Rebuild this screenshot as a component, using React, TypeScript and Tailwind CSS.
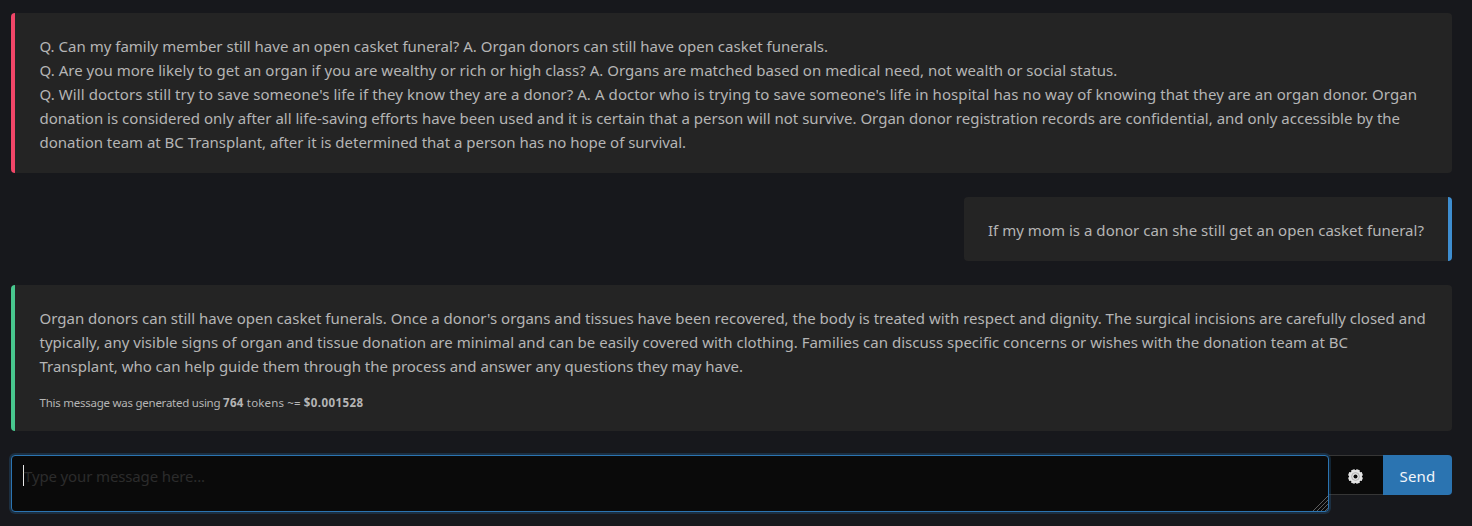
import { useId } from "react";

type Line = { text: string; tracking: string };

const context: Line[] = [
  { text: "Q. Can my family member still have an open casket funeral? A. Organ donors can still have open casket funerals.", tracking: "tracking-[0.004px]" },
  { text: "Q. Are you more likely to get an organ if you are wealthy or rich or high class? A. Organs are matched based on medical need, not wealth or social status.", tracking: "tracking-[0.033px]" },
  { text: "Q. Will doctors still try to save someone's life if they know they are a donor? A. A doctor who is trying to save someone's life in hospital has no way of knowing that they are an organ donor. Organ", tracking: "tracking-[0.079px]" },
  { text: "donation is considered only after all life-saving efforts have been used and it is certain that a person will not survive. Organ donor registration records are confidential, and only accessible by the", tracking: "tracking-[0.01px]" },
  { text: "donation team at BC Transplant, after it is determined that a person has no hope of survival.", tracking: "tracking-[-0.02px]" },
];

const question: Line[] = [
  { text: "If my mom is a donor can she still get an open casket funeral?", tracking: "tracking-[0.026px]" },
];

const answer: Line[] = [
  { text: "Organ donors can still have open casket funerals. Once a donor's organs and tissues have been recovered, the body is treated with respect and dignity. The surgical incisions are carefully closed and", tracking: "tracking-[0.004px]" },
  { text: "typically, any visible signs of organ and tissue donation are minimal and can be easily covered with clothing. Families can discuss specific concerns or wishes with the donation team at BC", tracking: "tracking-[0.007px]" },
  { text: "Transplant, who can help guide them through the process and answer any questions they may have.", tracking: "tracking-[-0.024px]" },
];

function Lines({ lines }: { lines: Line[] }) {
  return (
    <p className="whitespace-nowrap text-[15px] leading-6">
      {lines.map((line) => (
        <span key={line.text} className={`block ${line.tracking}`}>
          {line.text}
        </span>
      ))}
    </p>
  );
}

function Gear() {
  const mask = useId();
  const teeth = [0, 45, 90, 135, 180, 225, 270, 315];
  return (
    <svg viewBox="0 0 15 15" className="size-[15px]" aria-hidden="true">
      <mask id={mask}>
        <rect width="15" height="15" fill="white" />
        <circle cx="7.5" cy="7.5" r="2" fill="black" />
      </mask>
      <g mask={`url(#${mask})`} fill="#e4e4e4">
        <circle cx="7.5" cy="7.5" r="6.5" />
        {teeth.map((a) => (
          <rect key={a} x="5.6" y="0.1" width="3.8" height="4" rx="0.5" transform={`rotate(${a + 22.5} 7.5 7.5)`} />
        ))}
        <circle cx="7.5" cy="7.5" r="3.9" fill="none" stroke="#a6a6a6" strokeWidth="0.8" />
      </g>
    </svg>
  );
}

export default function App() {
  return (
    <main className="flex h-[526px] flex-col gap-6 overflow-hidden bg-[#17181c] pt-[13px] pr-5 pl-[11px] font-['Noto_Sans','Open_Sans',sans-serif] text-[#b5b5b5]">
      <article className="rounded border-l-4 border-[#f14668] bg-[#242424] pt-[21px] pr-6 pb-[19px] pl-[24.5px]">
        <Lines lines={context} />
      </article>

      <article className="self-end rounded border-r-4 border-[#3e8ed0] bg-[#242424] px-6 pt-[21px] pb-[19px]">
        <Lines lines={question} />
      </article>

      <article className="rounded border-l-4 border-[#48c78e] bg-[#242424] pt-[21px] pr-6 pb-[19px] pl-[24.5px]">
        <Lines lines={answer} />
        <p className="mt-4 whitespace-nowrap text-[11.5px] leading-[18px]">
          <span className="tracking-[-0.25px]">This message was generated using </span>
          <strong className="tracking-[0.3px]">764</strong>
          <span className="tracking-[0.15px]"> tokens ~= </span>
          <strong className="tracking-[0.42px]">$0.001528</strong>
        </p>
      </article>

      <form className="flex items-start">
        <div className="relative z-10 flex h-[57px] w-[1318px] rounded border border-[#2b74b1] bg-[#0a0a0a] px-[11px] pt-2 shadow-[0_0_0_2px_rgba(43,116,177,0.25)]">
          <span className="mt-px h-[21px] w-px bg-[#e8e8e8]" />
          <span className="whitespace-nowrap text-[15px] leading-6 tracking-[-0.135px] text-[#2c2c2c]">Type your message here...</span>
          <svg viewBox="0 0 16 16" className="absolute right-0 bottom-0 size-4" stroke="#686868" strokeWidth="0.9" aria-hidden="true">
            <path d="M1 16 16 1M5 16 16 5M9 16l7-7M13 16l3-3" />
          </svg>
        </div>
        <button type="button" aria-label="Settings" className="flex h-10 w-[54px] items-center justify-center border-y border-[#363636] bg-[#0a0a0a] pt-[3px] pr-px">
          <Gear />
        </button>
        <button type="button" className="flex h-10 flex-1 items-center justify-center rounded-r bg-[#2b74b1] pt-px text-[15px] leading-6 tracking-[0.2px] text-[#f2f6fa]">
          Send
        </button>
      </form>
    </main>
  );
}
